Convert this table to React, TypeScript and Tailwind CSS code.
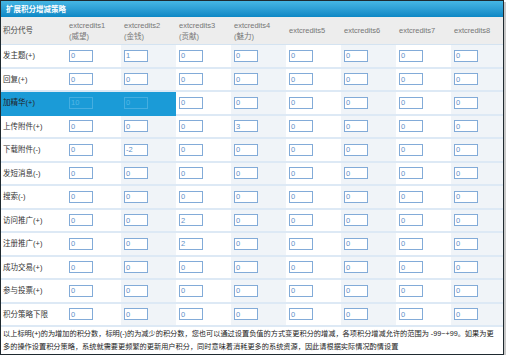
import React from "react";

const cols = [
  ["extcredits1", "(威望)"],
  ["extcredits2", "(金钱)"],
  ["extcredits3", "(贡献)"],
  ["extcredits4", "(魅力)"],
  ["extcredits5", ""],
  ["extcredits6", ""],
  ["extcredits7", ""],
  ["extcredits8", ""],
];

const rows: [string, string[]][] = [
  ["发主题(+)", ["0", "1", "0", "0", "0", "0", "0", "0"]],
  ["回复(+)", ["0", "0", "0", "0", "0", "0", "0", "0"]],
  ["加精华(+)", ["10", "0", "0", "0", "0", "0", "0", "0"]],
  ["上传附件(+)", ["0", "0", "0", "3", "0", "0", "0", "0"]],
  ["下载附件(-)", ["0", "-2", "0", "0", "0", "0", "0", "0"]],
  ["发短消息(-)", ["0", "0", "0", "0", "0", "0", "0", "0"]],
  ["搜索(-)", ["0", "0", "0", "0", "0", "0", "0", "0"]],
  ["访问推广(+)", ["0", "0", "2", "0", "0", "0", "0", "0"]],
  ["注册推广(+)", ["0", "0", "2", "0", "0", "0", "0", "0"]],
  ["成功交易(+)", ["0", "0", "0", "0", "0", "0", "0", "0"]],
  ["参与投票(+)", ["0", "0", "0", "0", "0", "0", "0", "0"]],
  ["积分策略下限", ["0", "0", "0", "0", "0", "0", "0", "0"]],
];

const font = { fontFamily: '"Liberation Sans", "Noto Sans CJK SC", sans-serif' };

export default function App() {
  return (
    <div className="w-[506px] h-[355px] bg-white text-[7.5px] leading-[11px]" style={font}>
      <div className="w-[504px] border border-[#1f2a30] bg-white shadow-[2px_2px_0_#c8c8c8]">
        <div className="h-[16px] bg-gradient-to-b from-[#45b6e4] to-[#0b88c5] flex items-center pl-[5px] text-white font-bold text-[7.5px]">
          扩展积分增减策略
        </div>
        <div className="grid grid-cols-[65px_repeat(7,55px)_1fr]">
          <div className="h-[28px] bg-[#ededed] border-b border-[#d4e3f1] flex items-center pl-[2px] text-[#444]">
            积分代号
          </div>
          {cols.map(([a, b], i) => (
            <div
              key={i}
              className="h-[28px] bg-[#ededed] border-b border-[#d4e3f1] flex flex-col justify-center pl-[3px] text-[#777]"
            >
              <span>{a}</span>
              {b && <span>{b}</span>}
            </div>
          ))}
          {rows.map(([label, vals], r) => {
            const hl = r === 2;
            return (
              <React.Fragment key={r}>
                <div
                  className={
                    "h-[23.5px] border-b-2 flex items-center pl-[2px] " +
                    (hl ? "bg-[#1b9bd7] border-[#1b9bd7] text-[#222]" : "bg-white border-[#dde9f5] text-[#333]")
                  }
                >
                  {label}
                </div>
                {vals.map((v, c) => {
                  const cellHl = hl && c < 2;
                  const bg = cellHl
                    ? "bg-[#1b9bd7] border-[#1b9bd7]"
                    : c % 2 === 1
                    ? "bg-[#f0f4f8] border-[#dde9f5]"
                    : "bg-white border-[#dde9f5]";
                  return (
                    <div key={c} className={"h-[23.5px] border-b-2 flex items-center pl-[3px] " + bg}>
                      <div
                        className={
                          "w-[24px] h-[12px] border flex items-center pl-[1px] text-[7.5px] " +
                          (cellHl
                            ? "border-[#46aee0] bg-[#1b9bd7] text-[#52b8e6]"
                            : "border-[#82abd8] bg-white text-[#5d8fc8]")
                        }
                      >
                        {v}
                      </div>
                    </div>
                  );
                })}
              </React.Fragment>
            );
          })}
        </div>
        <div className="px-[2px] pt-0 pb-[1px] text-[#222] text-[7.2px] leading-[13px] whitespace-nowrap">
          <div>
            以上标明(+)的为增加的积分数，标明(-)的为减少的积分数，您也可以通过设置负值的方式变更积分的增减，各项积分增减允许的范围为 -99~+99。如果为更
          </div>
          <div>
            多的操作设置积分策略，系统就需要更频繁的更新用户积分，同时意味着消耗更多的系统资源，因此请根据实际情况酌情设置
          </div>
        </div>
      </div>
    </div>
  );
}
